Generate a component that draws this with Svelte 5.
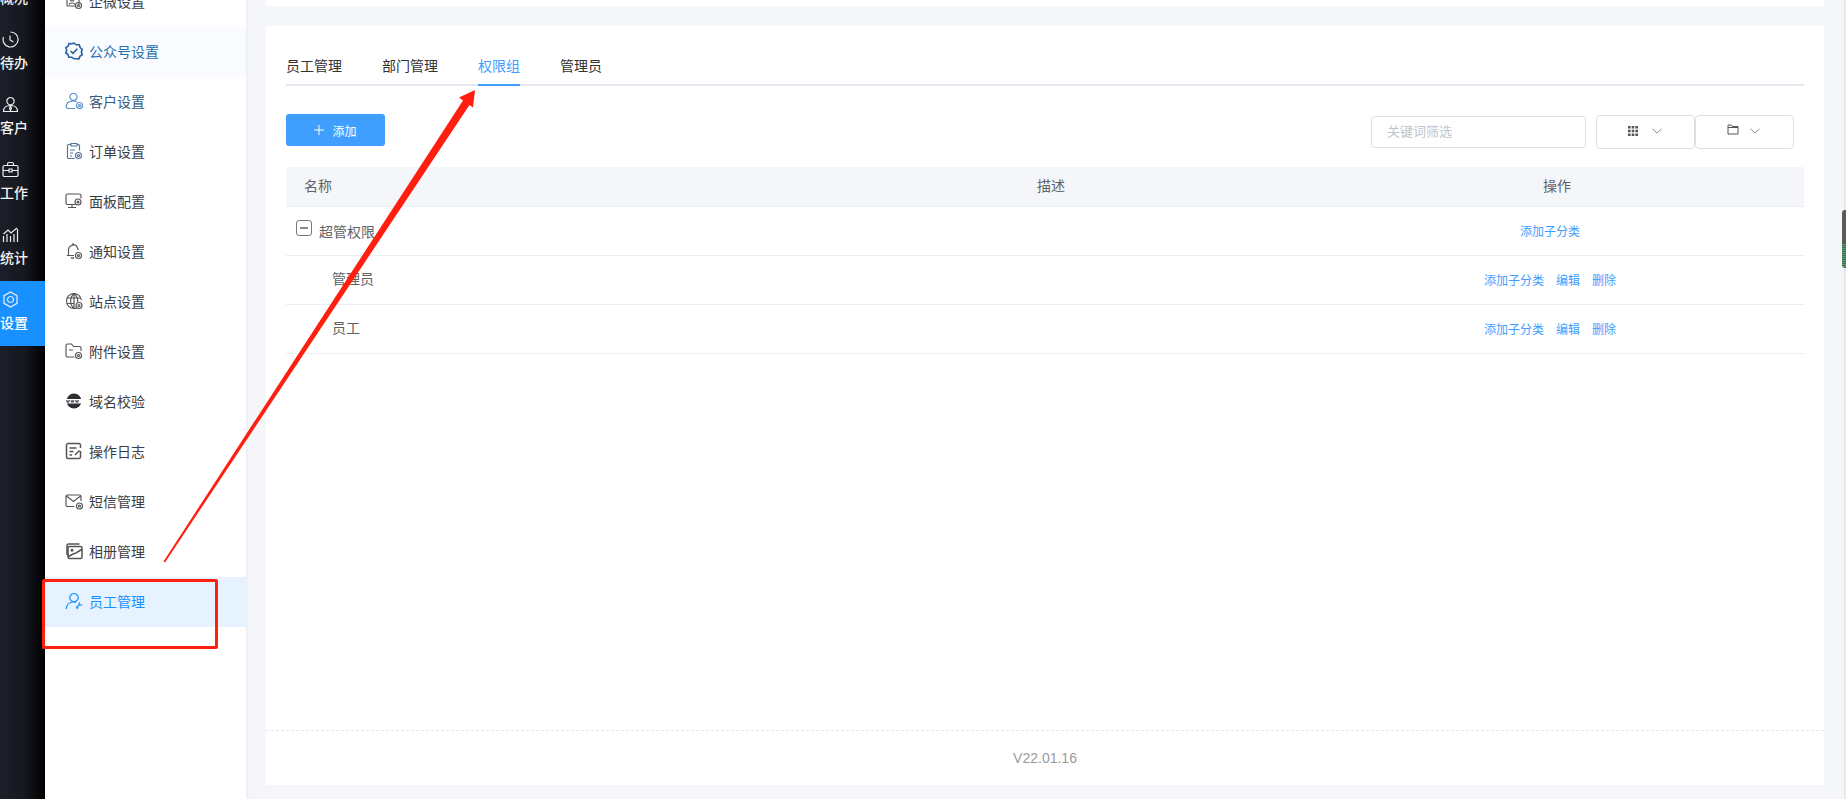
<script>
  const gear = (x, y) => `M${x + 3} ${y}a3 3 0 1 1-6 0a3 3 0 1 1 6 0M${x + 1} ${y}a1 1 0 1 1-2 0a1 1 0 1 1 2 0`;
  const menu = [
    { label: '企微设置', d: ['M3 3h10a1 1 0 0 1 1 1v8M3 3a1 1 0 0 0-1 1v9a1 1 0 0 0 1 1h7M5 1.5h7M5 7a2 2 0 1 0 4 0a2 2 0 1 0-4 0M4 12.5c.5-2 5-2 6 0', gear(13.5, 13.5)] },
    { label: '公众号设置', cls: 'hover', d: ['M9 1.2l2.4 1.6 2.9-.1.8 2.8 2.2 1.9-1 2.7 1 2.6-2.4 1.5-.9 2.7-2.9-.2L9 16.8l-2.3-1.6-2.9.1-.8-2.7L.8 11l1-2.7-1-2.6 2.3-1.5.8-2.7 2.8.2z', 'M5.6 9l2.4 2.4 4.4-4.6'], w: 1.6 },
    { label: '客户设置', cls: 'tint', c: '#5d8fc8', d: ['M8.5 1.2a3.6 3.6 0 1 0 .01 0M1.5 15.500c-1-4 2-6.500 7-6.500 1.600 0 2.600.3 3.300.7M1.500 15.500c.3.7 1 1 1.600 1h7', gear(14.5, 13.5)] },
    { label: '订单设置', c: '#55749a', d: ['M6 2.500H3.500a1 1 0 0 0-1 1v12a1 1 0 0 0 1 1h6M12 2.500h1.500a1 1 0 0 1 1 1v5M6 1.500h6v2.500H6zM5 8h5M5 11h3M5 14h2', gear(13.5, 13.5)] },
    { label: '面板配置', d: ['M10 12.500H2.500a1.500 1.500 0 0 1-1.500-1.500V3.500A1.500 1.500 0 0 1 2.500 2h12A1.500 1.500 0 0 1 16 3.500v3M3 15.500h8M7 13v2.500', gear(13, 10)] },
    { label: '通知设置', d: ['M3.500 13V8a5 5 0 0 1 8-4l1.500 3v1M1.800 13.500H9M8 1v1.500M6 15.500a2 2 0 0 0 3 0', gear(13.500, 13.500)] },
    { label: '站点设置', d: ['M9 1.500a7.500 7.500 0 1 0 0 15a7.500 7.500 0 0 0 3-.6M16.400 8A7.500 7.500 0 0 0 9 1.500M9 1.500c-4.500 4-4.500 11 0 15M9 1.500c3 2.500 4 6 3.500 8.500M9 1.500v15M2 6h14M1.700 11.500h8', gear(14, 13.500)] },
    { label: '附件设置', d: ['M9.500 15H2.500A1.500 1.500 0 0 1 1 13.500V3.500A1.500 1.500 0 0 1 2.500 2h4l2 2.500h6A1.500 1.500 0 0 1 16 6v3M4 8h4', gear(13.500, 13.500)] },
    { label: '域名校验', www: true },
    { label: '操作日志', d: ['M15.500 9v6a1.500 1.500 0 0 1-1.500 1.500H3A1.500 1.500 0 0 1 1.500 15V3A1.500 1.500 0 0 1 3 1.500h11A1.500 1.500 0 0 1 15.500 3v3M4.500 6h7M4.500 9.500h4M4.500 13h2.500M10 13l4.500-4.500'], w: 1.500 },
    { label: '短信管理', d: ['M9.500 14.500H2.500A1.500 1.500 0 0 1 1 13V4.500A1.500 1.500 0 0 1 2.500 3h12A1.500 1.500 0 0 1 16 4.500V9M1.500 4l7 5.500L15.500 4', gear(14.500, 14)] },
    { label: '相册管理', d: ['M2 13V3.500A1.500 1.500 0 0 1 3.500 2h11M4.500 4.500h11A1.500 1.500 0 0 1 17 6v9a1.500 1.500 0 0 1-1.500 1.500h-11A1.500 1.500 0 0 1 3 15V6a1.500 1.500 0 0 1 1.500-1.500M7 7.500a.8.800 0 1 0 .01 0M3.500 14.500L8 12l3-1 5.500-3.500'], w: 1.500 },
    { label: '员工管理', cls: 'active', c: '#1890ff', d: ['M9 1.500a4.200 4.200 0 1 0 .01 0M1.200 17c.5-4.500 3.300-7 7-7 1 0 2 .2 2.800.5', 'M11 15.500l3.500-2.800M14.800 10.500c-.9.9-.9 1.900-.3 2.500.7.500 1.700.300 2.400-.7M12 17l1-2'], w: 1.200 }
  ];
  const rail = [
    { label: '概况', d: [] },
    { label: '待办', d: ['M8.500 1a7.500 7.500 0 1 1-7 5M8 4.500v4.500l3.500 2'] },
    { label: '客户', d: ['M8.500 1.500a3.700 3.700 0 1 0 .01 0M1.500 15.500c0-4 3-6 7-6s7 2 7 6zM8.500 10l-1 2.500 1 2 1-2z'] },
    { label: '工作', d: ['M2.500 4.500h12a1.500 1.500 0 0 1 1.500 1.500v8a1.500 1.500 0 0 1-1.500 1.500h-12A1.500 1.500 0 0 1 1 14V6a1.500 1.500 0 0 1 1.500-1.500M5.500 4.500V3a1.500 1.500 0 0 1 1.500-1.500h3A1.500 1.500 0 0 1 11.500 3v1.500M1 9.500h5.500M10.500 9.500H16M7 8h3v3H7z'] },
    { label: '统计', d: ['M1.500 16V10M5 16V8M8.500 16V10M12 16V8M15.500 16V3M1.500 8L6 4l3 3 6-5'] },
    { label: '设置', cls: 'on', d: ['M8.500 1l6.500 3.700v7.600l-6.500 3.700L2 12.300V4.700zM8.500 5.500a3 3 0 1 0 .01 0'] }
  ];
  const rows = [
    { name: '超管权限', root: true, ops: ['添加子分类'] },
    { name: '管理员', ops: ['添加子分类', '编辑', '删除'] },
    { name: '员工', ops: ['添加子分类', '编辑', '删除'] }
  ];
</script>

<div class="page">
  <nav class="rail">
    <ul>
      {#each rail as r}
        <li class={r.cls}>
          <svg viewBox="0 0 17 17" width="17" height="17">
            {#each r.d as p}<path d={p} />{/each}
          </svg>
          <span>{r.label}</span>
        </li>
      {/each}
    </ul>
  </nav>

  <aside class="side">
    <ul>
      {#each menu as m}
        <li class={m.cls}>
          {#if m.www}
            <svg class="ico" viewBox="0 0 18 18" width="18" height="18">
              <circle cx="9" cy="9" r="7.500" fill="#2f2f33" stroke="none" />
              <rect x="0" y="7" width="18" height="4.500" fill="#fff" stroke="none" />
              <path d="M1.500 8l.8 2.500.7-2 .7 2 .8-2.500M6 8l.8 2.500.7-2 .7 2 .8-2.500M10.500 8l.8 2.500.7-2 .7 2 .8-2.500" stroke="#2f2f33" stroke-width=".8" />
            </svg>
          {:else}
            <svg class="ico" viewBox="0 0 18 18" width="18" height="18" style:stroke={m.c} stroke-width={m.w ?? 1.150}>
              {#each m.d as p}<path d={p} />{/each}
            </svg>
          {/if}
          <span>{m.label}</span>
        </li>
      {/each}
    </ul>
  </aside>

  <main class="main">
    <div class="topcard"></div>
    <section class="card">
      <div class="body">
        <div class="tabs">
          <span class="tab">员工管理</span>
          <span class="tab">部门管理</span>
          <span class="tab cur">权限组</span>
          <span class="tab">管理员</span>
        </div>

        <div class="tools">
          <button class="add">
            <svg class="plus" viewBox="0 0 10 10" width="10" height="10"><path d="M5 0v10M0 5h10" /></svg>
            添加
          </button>
          <div class="right">
            <input class="search" placeholder="关键词筛选" />
            <div class="groups">
              <button class="drop">
                <svg viewBox="0 0 10 10" width="10" height="10"><path class="grid" d="M0 0h2.600v2.600H0zM3.700 0h2.600v2.600H3.700zM7.400 0H10v2.600H7.400zM0 3.700h2.600v2.600H0zM3.700 3.700h2.600v2.600H3.700zM7.400 3.700H10v2.600H7.400zM0 7.400h2.600V10H0zM3.700 7.400h2.600V10H3.700zM7.400 7.400H10V10H7.400z" /></svg>
                <svg class="chev" viewBox="0 0 10 6" width="10" height="6"><path d="M.5.800L5 5 9.500.800" /></svg>
              </button>
              <button class="drop second">
                <svg class="folder" viewBox="0 0 12 11" width="12" height="11"><path d="M1 1h3.500l1 1.500H11v7.500H1zM1 3.500h10" /></svg>
                <svg class="chev" viewBox="0 0 10 6" width="10" height="6"><path d="M.5.800L5 5 9.500.800" /></svg>
              </button>
            </div>
          </div>
        </div>

        <table>
          <thead>
            <tr><th class="first">名称</th><th>描述</th><th>操作</th></tr>
          </thead>
          <tbody>
            {#each rows as row}
              <tr>
                <td class="name" class:root={row.root}>
                  {#if row.root}<span class="minus"></span>{/if}{row.name}
                </td>
                <td></td>
                <td class="ops">
                  {#each row.ops as op}<a href="#/">{op}</a>{/each}
                </td>
              </tr>
            {/each}
          </tbody>
        </table>
      </div>
      <footer>V22.01.16</footer>
    </section>
  </main>

  <div class="markbox"></div>
  <svg class="arrow" viewBox="0 0 1846 799" width="1846" height="799">
    <polygon points="163.500,561.500 463,100.500 459,97.500 475,90 473,107.500 469.500,105 165,562.500" />
  </svg>
  <div class="edge"><i></i></div>
</div>

<style>
  :global(body) {
    margin: 0;
    overflow: hidden;
  }
  .page {
    position: relative;
    display: flex;
    width: 1846px;
    height: 799px;
    overflow: hidden;
    background: #f5f6fa;
    font-family: "Noto Sans CJK SC", "Liberation Sans", sans-serif;
    font-size: 14px;
    color: #333;
  }
  ul {
    list-style: none;
    margin: 0;
    padding: 0;
  }

  .rail {
    flex: 0 0 45px;
    overflow: hidden;
    background: linear-gradient(90deg, #1c1f29 0%, #16181f 55%, #000 100%);
  }
  .rail ul {
    margin-top: -44px;
  }
  .rail li {
    height: 65px;
    box-sizing: border-box;
    padding-top: 10px;
    color: #f2f2f2;
    font-weight: 500;
    line-height: 20px;
  }
  .rail li.on {
    background: #1890ff;
    color: #fff;
  }
  .rail svg {
    display: block;
    margin: 0 0 4px 2px;
    fill: none;
    stroke: #eee;
    stroke-width: 1.200;
  }
  .rail span {
    display: block;
    width: 27px;
    text-align: center;
    white-space: nowrap;
  }

  .side {
    flex: 0 0 201px;
    overflow: hidden;
    background: #fff;
    box-shadow: 1px 0 2px rgba(40, 50, 80, 0.06);
    z-index: 1;
  }
  .side ul {
    margin-top: -23px;
  }
  .side li {
    display: flex;
    align-items: center;
    box-sizing: border-box;
    height: 50px;
    padding: 0 0 2px 20px;
    color: #3a3d45;
  }
  .ico {
    flex: none;
    margin-right: 6px;
    fill: none;
    stroke: #555;
  }
  .side li.hover {
    background: #f9fbfe;
    color: #2b6fb3;
  }
  .side li.hover .ico {
    stroke: #2563a6;
  }
  .side li.tint {
    color: #33597e;
  }
  .side li.active {
    background: #e6f2fd;
    color: #1890ff;
  }

  .main {
    flex: 1;
    min-width: 0;
    padding: 0 22px 0 20px;
    display: flex;
    flex-direction: column;
  }
  .topcard {
    height: 6px;
    background: #fff;
    margin-bottom: 20px;
  }
  .card {
    height: 759px;
    display: flex;
    flex-direction: column;
    background: #fff;
  }
  .body {
    flex: 1;
    padding: 26px 20px 0;
  }

  .tabs {
    display: flex;
    gap: 40px;
    height: 32px;
    border-bottom: 2px solid #e4e7ed;
    line-height: 26px;
    color: #303133;
  }
  .tab {
    height: 32px;
    white-space: nowrap;
  }
  .tab.cur {
    color: #409eff;
    border-bottom: 2px solid #409eff;
  }

  .tools {
    display: flex;
    justify-content: space-between;
    margin-top: 28px;
    padding-right: 10px;
    height: 53px;
    align-items: flex-start;
  }
  button {
    font-family: inherit;
    background: #fff;
    cursor: pointer;
  }
  .add {
    width: 99px;
    height: 32px;
    margin: 0;
    padding: 0;
    border: 0;
    border-radius: 3px;
    background: #409eff;
    color: #fff;
    font-size: 12px;
    display: flex;
    align-items: center;
    justify-content: center;
    gap: 8px;
  }
  .plus {
    fill: none;
    stroke: #fff;
    stroke-width: 1;
  }
  .right {
    display: flex;
    gap: 10px;
    align-items: flex-start;
    margin-top: 1px;
  }
  .search {
    box-sizing: border-box;
    width: 215px;
    height: 32px;
    margin-top: 1px;
    padding: 0 15px 3px;
    border: 1px solid #dcdfe6;
    border-radius: 4px;
    outline: none;
    font-family: inherit;
    font-size: 13px;
    background: #fff;
  }
  .search::placeholder {
    color: #c0c4cc;
  }
  .groups {
    display: flex;
  }
  .drop {
    box-sizing: border-box;
    width: 99px;
    height: 34px;
    padding: 0 0 2px 31px;
    border: 1px solid #dcdfe6;
    border-radius: 4px;
    display: flex;
    align-items: center;
    justify-content: flex-start;
    gap: 14px;
  }
  .drop.second {
    gap: 11px;
  }
  .grid {
    fill: #555;
  }
  .chev {
    fill: none;
    stroke: #8a8f99;
    stroke-width: 1;
  }
  .folder {
    fill: none;
    stroke: #555;
    stroke-width: 1;
    margin-top: -3px;
  }

  table {
    width: 1518px;
    border-collapse: collapse;
    table-layout: fixed;
  }
  th {
    box-sizing: border-box;
    height: 39px;
    padding: 0 0 2px 12px;
    background: #f5f6fa;
    border-bottom: 1px solid #ebeef5;
    font-weight: 400;
    color: #606266;
    text-align: center;
  }
  th.first {
    text-align: left;
    padding-left: 18px;
  }
  td {
    box-sizing: border-box;
    height: 49px;
    padding: 0;
    border-bottom: 1px solid #ebeef5;
    color: #606266;
  }
  td.name {
    padding: 0 0 3px 46px;
  }
  td.name.root {
    padding: 0 0 1px 10px;
  }
  .minus {
    display: inline-block;
    position: relative;
    box-sizing: border-box;
    width: 16px;
    height: 16px;
    margin-right: 7px;
    vertical-align: 1px;
    border: 1px solid #777;
    border-radius: 3px;
  }
  .minus::after {
    content: "";
    position: absolute;
    left: 3px;
    right: 3px;
    top: 6px;
    height: 2px;
    background: #888;
  }
  .ops {
    text-align: center;
    padding: 0 2px 2px 0;
  }
  .ops a {
    margin: 0 6px;
    font-size: 12px;
    color: #409eff;
    text-decoration: none;
  }

  footer {
    height: 55px;
    border-top: 1px dashed #e4e7ed;
    text-align: center;
    line-height: 54px;
    font-family: "Liberation Sans", sans-serif;
    color: #999;
    box-sizing: border-box;
  }

  .markbox {
    position: absolute;
    left: 42px;
    top: 579px;
    width: 170px;
    height: 64px;
    border: 3px solid #ff1f10;
    border-radius: 2px;
    z-index: 3;
  }
  .arrow {
    position: absolute;
    left: 0;
    top: 0;
    fill: #ff1f10;
    z-index: 3;
    pointer-events: none;
  }
  .edge {
    position: absolute;
    right: 0;
    top: 0;
    bottom: 0;
    width: 2px;
    background: #e9e9ec;
  }
  .edge i {
    position: absolute;
    right: 0;
    top: 210px;
    width: 4px;
    height: 58px;
    border-radius: 3px 0 0 3px;
    background: linear-gradient(180deg, #5a5a5a 0 58%, transparent 58%), repeating-linear-gradient(180deg, #3fae5c 0 1px, #5a5a5a 1px 2px);
  }
</style>
